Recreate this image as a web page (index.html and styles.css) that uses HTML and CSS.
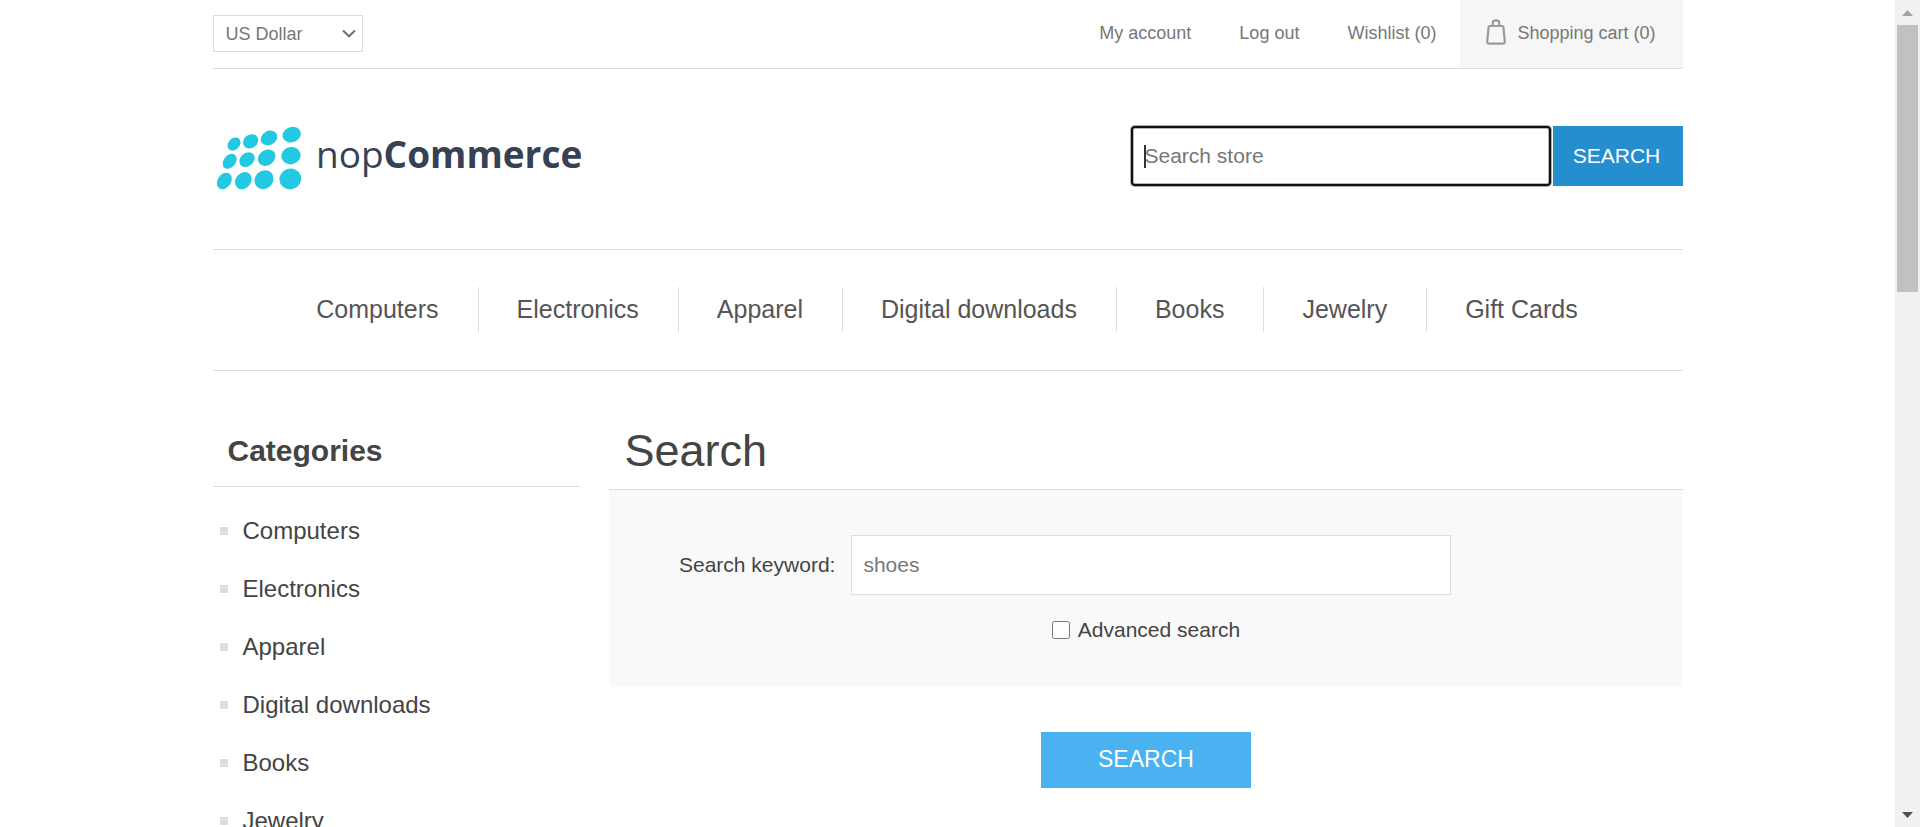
FILE: index.html
```html
<!DOCTYPE html>
<html lang="en">
<head>
<meta charset="utf-8">
<title>nopCommerce demo store. Search</title>
<link rel="stylesheet" href="styles.css">
</head>
<body>
<div class="page">
  <header>
    <div class="header-upper">
      <div class="currency">
        <select class="currency-select" aria-label="Currency selector">
          <option>US Dollar</option>
          <option>Euro</option>
        </select>
        <svg class="currency-arrow" viewBox="0 0 14 9" aria-hidden="true"><path d="M1 1.5 L7 7.3 L13 1.5" fill="none" stroke="#707070" stroke-width="2"/></svg>
      </div>
      <nav class="header-links" aria-label="Account">
        <a class="header-link" href="#">My account</a>
        <a class="header-link" href="#">Log out</a>
        <a class="header-link" href="#">Wishlist (0)</a>
        <a class="cart-link" href="#">
          <svg class="cart-icon" viewBox="0 0 20 26" aria-hidden="true">
            <path d="M3.8 7 H16.2 Q17.2 7 17.4 8 L18.8 22.6 Q18.8 24.6 17 24.6 H3 Q1.2 24.6 1.2 22.6 L2.6 8 Q2.8 7 3.8 7 Z M6.7 7 V4 Q6.7 1.4 10 1.4 Q13.3 1.4 13.3 4 V7" fill="none" stroke="#9a9a9a" stroke-width="2.2"/>
          </svg>
          <span>Shopping cart (0)</span>
        </a>
      </nav>
    </div>
    <div class="header-lower">
      <a class="logo-link" href="#" aria-label="nopCommerce">
        <svg class="logo" viewBox="0 0 380 70">
          <g fill="#23c8e2" transform="scale(.33333) translate(-39 -374)">
            <ellipse cx="102" cy="431" rx="22" ry="17" transform="rotate(-45 102 431)"/>
            <ellipse cx="152" cy="423" rx="24" ry="20" transform="rotate(-35 152 423)"/>
            <ellipse cx="207" cy="413" rx="26" ry="21" transform="rotate(-30 207 413)"/>
            <ellipse cx="275" cy="403" rx="28" ry="23" transform="rotate(-20 275 403)"/>
            <ellipse cx="89" cy="483" rx="25" ry="18" transform="rotate(-50 89 483)"/>
            <ellipse cx="141" cy="478" rx="25" ry="20" transform="rotate(-42 141 478)"/>
            <ellipse cx="200" cy="472" rx="28" ry="23" transform="rotate(-35 200 472)"/>
            <ellipse cx="273" cy="466" rx="29" ry="26" transform="rotate(-15 273 466)"/>
            <ellipse cx="73" cy="542" rx="27" ry="20" transform="rotate(-55 73 542)"/>
            <ellipse cx="130" cy="541" rx="28" ry="23" transform="rotate(-50 130 541)"/>
            <ellipse cx="192" cy="538" rx="30" ry="27" transform="rotate(-45 192 538)"/>
            <ellipse cx="271" cy="536" rx="33" ry="31" transform="rotate(-15 271 536)"/>
          </g>
          <text class="logo-text" x="103" y="43">nop<tspan class="logo-bold">Commerce</tspan></text>
        </svg>
      </a>
      <form class="store-search">
        <div class="store-field">
          <input class="store-input" type="text" placeholder="Search store" aria-label="Search store">
          <span class="caret"></span>
        </div>
        <button class="store-button" type="button">SEARCH</button>
      </form>
    </div>
  </header>

  <nav class="top-menu" aria-label="Main menu">
    <a class="menu-link" href="#">Computers</a>
    <a class="menu-link" href="#">Electronics</a>
    <a class="menu-link" href="#">Apparel</a>
    <a class="menu-link" href="#">Digital downloads</a>
    <a class="menu-link" href="#">Books</a>
    <a class="menu-link" href="#">Jewelry</a>
    <a class="menu-link" href="#">Gift Cards</a>
  </nav>

  <div class="columns">
    <aside class="side">
      <h2 class="side-title">Categories</h2>
      <ul class="side-list">
        <li class="side-item"><a class="side-link" href="#">Computers</a></li>
        <li class="side-item"><a class="side-link" href="#">Electronics</a></li>
        <li class="side-item"><a class="side-link" href="#">Apparel</a></li>
        <li class="side-item"><a class="side-link" href="#">Digital downloads</a></li>
        <li class="side-item"><a class="side-link" href="#">Books</a></li>
        <li class="side-item"><a class="side-link" href="#">Jewelry</a></li>
      </ul>
    </aside>
    <main class="center">
      <h1 class="page-title">Search</h1>
      <form>
        <div class="panel">
          <div class="keyword-row">
            <label class="keyword-label" for="q">Search keyword:</label>
            <input class="keyword-input" id="q" type="text" value="shoes">
          </div>
          <div class="advanced-row">
            <input class="advanced-box" id="adv" type="checkbox">
            <label for="adv">Advanced search</label>
          </div>
        </div>
        <div class="buttons">
          <button class="search-button" type="button">SEARCH</button>
        </div>
      </form>
    </main>
  </div>
</div>

<div class="scrollbar" aria-hidden="true">
  <div class="scroll-end"><svg class="scroll-arrow" viewBox="0 0 11 6"><path d="M0 6 L5.5 0 L11 6 Z" fill="#a3a3a3"/></svg></div>
  <div class="scroll-track"><div class="scroll-thumb"></div></div>
  <div class="scroll-end"><svg class="scroll-arrow" viewBox="0 0 11 6"><path d="M0 0 L5.5 6 L11 0 Z" fill="#505050"/></svg></div>
</div>
</body>
</html>
```
FILE: styles.css
```css
* {
  box-sizing: border-box;
}

body {
  margin: 0;
  height: 100vh;
  overflow: hidden;
  padding-right: 25px;
  background: #fff;
  color: #444;
  font-family: "Liberation Sans", Arial, Helvetica, sans-serif;
  font-size: 21px;
}

a {
  color: inherit;
  text-decoration: none;
}

input,
select,
button {
  margin: 0;
  border-radius: 0;
  font-family: inherit;
}

.page {
  max-width: 1470px;
  margin: 0 auto;
}

/* header */
.header-upper {
  display: flex;
  justify-content: space-between;
  align-items: flex-start;
  border-bottom: 1px solid #ddd;
  color: #777;
  font-size: 18px;
}

.currency {
  position: relative;
  width: 150px;
  margin-top: 15px;
}

.currency-select {
  display: block;
  width: 100%;
  height: 37px;
  padding: 0 12px;
  border: 1px solid #ddd;
  background: #fff;
  color: #777;
  font-size: 18px;
  appearance: none;
}

.currency-arrow {
  position: absolute;
  top: 14px;
  right: 7px;
  width: 14px;
  height: 9px;
  pointer-events: none;
}

.header-links {
  display: flex;
  line-height: 66px;
}

.header-link {
  padding: 0 24px;
}

.cart-link {
  display: flex;
  gap: 11px;
  padding: 0 27px 2px 26px;
  background: #f6f6f6;
}

.cart-icon {
  width: 20px;
  height: 26px;
  margin-top: 19px;
}

.header-lower {
  display: flex;
  justify-content: space-between;
  align-items: flex-start;
  padding: 56px 0 54px;
}

.logo-link {
  display: block;
}

.logo {
  display: block;
  width: 380px;
  height: 70px;
}

.logo-text {
  fill: #364153;
  font-family: "Open Sans", "Noto Sans", sans-serif;
  font-size: 37px;
}

.logo-bold {
  font-weight: 700;
}

.store-search {
  display: flex;
  gap: 2px;
  padding-top: 1px;
}

.store-field {
  position: relative;
  width: 420px;
}

.store-input {
  display: block;
  width: 100%;
  height: 60px;
  padding: 0 12px;
  border: 2px solid #101010;
  border-radius: 4px;
  outline: none;
  box-shadow: 0 0 0 1px rgba(16, 16, 16, .35), inset 0 0 0 1px rgba(16, 16, 16, .3);
  color: #777;
  font-size: 21px;
}

.store-input::placeholder {
  color: #777;
}

.caret {
  position: absolute;
  top: 19px;
  left: 13px;
  width: 2px;
  height: 23px;
  background: #333;
}

.store-button {
  width: 130px;
  height: 60px;
  padding: 0 2px 0 0;
  border: 0;
  background: #248ece;
  color: #fff;
  font-size: 21px;
}

/* main menu */
.top-menu {
  display: flex;
  justify-content: center;
  padding: 37px 0 38px;
  border-top: 1px solid #ddd;
  border-bottom: 1px solid #ddd;
  color: #555;
  font-size: 25px;
  line-height: 45px;
}

.menu-link {
  padding: 0 39px 0 38px;
}

.menu-link + .menu-link {
  border-left: 1px solid #ddd;
}

/* columns */
.columns {
  display: flex;
  justify-content: space-between;
  padding-top: 56px;
}

.side {
  width: 25%;
}

.side-title {
  margin: 0;
  padding: 0 15px 11px;
  border-bottom: 1px solid #ddd;
  font-size: 30px;
  line-height: 48px;
}

.side-list {
  margin: 15px 0 0;
  padding: 0;
  list-style: none;
}

.side-item {
  display: flex;
  align-items: center;
  gap: 15px;
  padding: 12px 7px;
  font-size: 24px;
  line-height: 34px;
}

.side-item::before {
  content: "";
  width: 8px;
  height: 8px;
  background: #ddd;
}

.center {
  width: 73%;
}

.page-title {
  margin: 0;
  padding: 0 15px 14px;
  border-bottom: 1px solid #ddd;
  font-size: 45px;
  font-weight: 400;
  line-height: 48px;
}

.panel {
  display: flex;
  flex-direction: column;
  gap: 23px;
  padding: 45px 0;
  background: #f9f9f9;
}

.keyword-row {
  display: flex;
  align-items: center;
  gap: 16px;
}

.keyword-label {
  width: 226px;
  text-align: right;
}

.keyword-input {
  width: 600px;
  height: 60px;
  padding: 0 11px;
  border: 1px solid #ddd;
  background: #fff;
  color: #777;
  font-size: 21px;
}

.advanced-row {
  display: flex;
  justify-content: center;
  align-items: center;
  gap: 8px;
  line-height: 24px;
}

.advanced-box {
  width: 18px;
  height: 18px;
}

.buttons {
  display: flex;
  justify-content: center;
  padding-top: 45px;
}

.search-button {
  width: 210px;
  height: 56px;
  padding: 0 0 2px;
  border: 0;
  background: #4ab2f1;
  color: #fff;
  font-size: 23px;
}

/* window scrollbar */
.scrollbar {
  position: fixed;
  top: 0;
  right: 0;
  bottom: 0;
  display: flex;
  flex-direction: column;
  width: 25px;
  background: #f1f1f1;
}

.scroll-end {
  display: flex;
  justify-content: center;
  align-items: center;
  height: 25px;
}

.scroll-arrow {
  width: 11px;
  height: 6px;
}

.scroll-track {
  flex: 1;
  padding: 0 2px;
}

.scroll-thumb {
  height: 34.3%;
  background: #c1c1c1;
}
```
